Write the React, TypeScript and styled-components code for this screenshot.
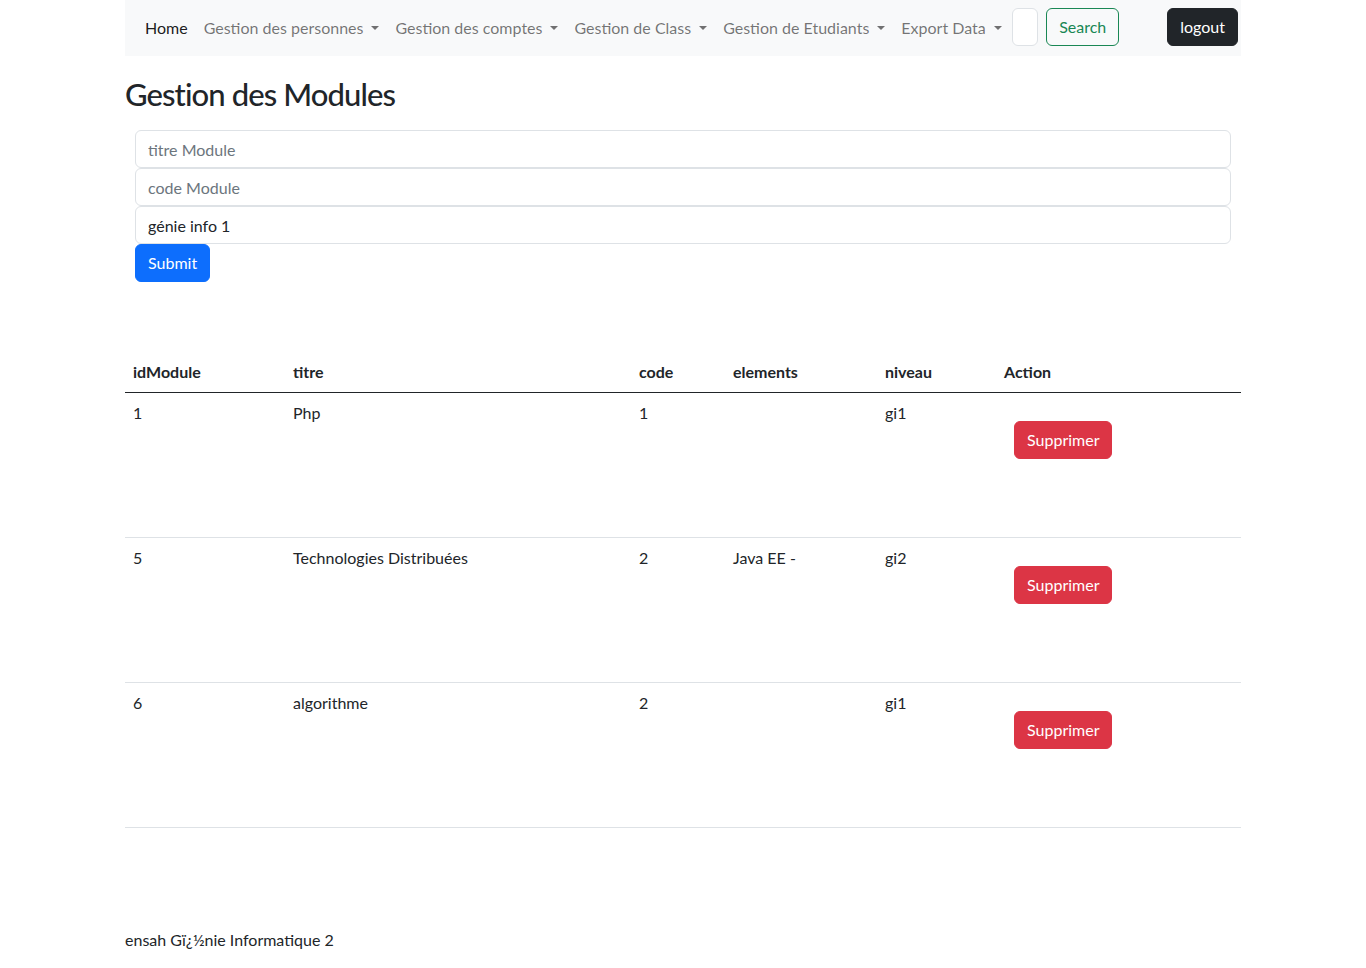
import { createGlobalStyle } from 'styled-components';
import styled from 'styled-components';

const GlobalStyle = createGlobalStyle`
  * {
    box-sizing: border-box;
  }

  body {
    margin: 0;
    background: #fff;
    color: #212529;
    font-family: Lato, 'Liberation Sans', sans-serif;
    font-size: 16px;
    line-height: 1.5;
  }
`;

type Module = {
  id: number;
  titre: string;
  code: string;
  elements: string;
  niveau: string;
};

const modules: Module[] = [
  { id: 1, titre: 'Php', code: '1', elements: '', niveau: 'gi1' },
  { id: 5, titre: 'Technologies Distribuées', code: '2', elements: 'Java EE -', niveau: 'gi2' },
  { id: 6, titre: 'algorithme', code: '2', elements: '', niveau: 'gi1' },
];

const navItems = [
  'Gestion des personnes',
  'Gestion des comptes',
  'Gestion de Class',
  'Gestion de Etudiants',
  'Export Data',
];

const columns = [
  { label: 'idModule', width: 160 },
  { label: 'titre', width: 346 },
  { label: 'code', width: 94 },
  { label: 'elements', width: 152 },
  { label: 'niveau', width: 119 },
  { label: 'Action', width: 245 },
];

export default function App() {
  return (
    <>
      <GlobalStyle />
      <Container>
        <Navbar>
          <NavList>
            <li>
              <NavLink $active>Home</NavLink>
            </li>
            {navItems.map((item) => (
              <li key={item}>
                <NavLink $dropdown>{item}</NavLink>
              </li>
            ))}
          </NavList>
          <SearchForm onSubmit={(e) => e.preventDefault()}>
            <SearchInput type="search" aria-label="Search" />
            <Button $variant="outline-success" type="submit">
              Search
            </Button>
          </SearchForm>
          <Button $variant="dark" type="button">
            logout
          </Button>
        </Navbar>

        <Title>Gestion des Modules</Title>

        <ModuleForm onSubmit={(e) => e.preventDefault()}>
          <Input placeholder="titre Module" />
          <Input placeholder="code Module" />
          <Input defaultValue="génie info 1" />
          <SubmitRow>
            <Button $variant="primary" type="submit">
              Submit
            </Button>
          </SubmitRow>
        </ModuleForm>

        <Table>
          <colgroup>
            {columns.map((col) => (
              <Col key={col.label} $width={col.width} />
            ))}
          </colgroup>
          <thead>
            <tr>
              {columns.map((col) => (
                <Th key={col.label}>{col.label}</Th>
              ))}
            </tr>
          </thead>
          <tbody>
            {modules.map((m) => (
              <tr key={m.id}>
                <Td>{m.id}</Td>
                <Td>{m.titre}</Td>
                <Td>{m.code}</Td>
                <Td>{m.elements}</Td>
                <Td>{m.niveau}</Td>
                <Td>
                  <ActionCell>
                    <Button $variant="danger" type="button">
                      Supprimer
                    </Button>
                  </ActionCell>
                </Td>
              </tr>
            ))}
          </tbody>
        </Table>

        <Footer>ensah Gï¿½nie Informatique 2</Footer>
      </Container>
    </>
  );
}

const Container = styled.div`
  width: 1116px;
  margin: 0 auto;
`;

const Navbar = styled.nav`
  display: flex;
  align-items: flex-start;
  height: 56px;
  padding: 8px 3px 0 12px;
  background: #f8f9fa;
`;

const NavList = styled.ul`
  display: flex;
  margin: 0 auto 0 0;
  padding: 0;
  list-style: none;
`;

const NavLink = styled.a<{ $active?: boolean; $dropdown?: boolean }>`
  display: flex;
  align-items: center;
  padding: 8px;
  color: ${({ $active }) => ($active ? 'rgba(0, 0, 0, 0.9)' : 'rgba(0, 0, 0, 0.55)')};
  text-decoration: none;
  cursor: pointer;

  ${({ $dropdown }) =>
    $dropdown &&
    `
    &::after {
      content: '';
      margin-left: 0.5em;
      border-top: 0.3em solid;
      border-right: 0.3em solid transparent;
      border-left: 0.3em solid transparent;
    }
  `}
`;

const SearchForm = styled.form`
  display: flex;
  gap: 8px;
  margin: 0 48px 0 0;
`;

const SearchInput = styled.input`
  width: 26px;
  height: 38px;
  padding: 6px 0;
  border: 1px solid #dee2e6;
  border-radius: 6px;
  background: #fff;
`;

const variants = {
  primary: { bg: '#0d6efd', border: '#0d6efd', color: '#fff' },
  danger: { bg: '#dc3545', border: '#dc3545', color: '#fff' },
  dark: { bg: '#212529', border: '#212529', color: '#fff' },
  'outline-success': { bg: 'transparent', border: '#198754', color: '#198754' },
};

const Button = styled.button<{ $variant: keyof typeof variants }>`
  height: 38px;
  padding: 6px 12px;
  border: 1px solid ${({ $variant }) => variants[$variant].border};
  border-radius: 6px;
  background: ${({ $variant }) => variants[$variant].bg};
  color: ${({ $variant }) => variants[$variant].color};
  font-family: inherit;
  font-size: 16px;
  line-height: 24px;
  cursor: pointer;
`;

const Title = styled.h2`
  margin: 19px 0 17px;
  font-size: 31px;
  font-weight: 500;
  line-height: 38px;
  letter-spacing: -0.9px;
`;

const ModuleForm = styled.form`
  display: flex;
  flex-direction: column;
  margin: 0 10px;
`;

const Input = styled.input`
  display: block;
  width: 100%;
  height: 38px;
  padding: 6px 12px;
  border: 1px solid #dee2e6;
  border-radius: 6px;
  color: #212529;
  font-family: inherit;
  font-size: 16px;
  line-height: 24px;

  &::placeholder {
    color: #6c757d;
  }
`;

const SubmitRow = styled.div`
  display: flex;
`;

const Table = styled.table`
  width: 100%;
  margin-top: 70px;
  border-collapse: collapse;
  table-layout: fixed;
`;

const Col = styled.col<{ $width: number }>`
  width: ${({ $width }) => $width}px;
`;

const Th = styled.th`
  padding: 8px;
  border-bottom: 1px solid #212529;
  font-weight: 700;
  text-align: left;
`;

const Td = styled.td`
  padding: 8px;
  border-bottom: 1px solid #dee2e6;
  vertical-align: top;
`;

const ActionCell = styled.div`
  height: 128px;
  padding: 20px 0 0 10px;
`;

const Footer = styled.footer`
  margin-top: 100px;
  padding-bottom: 16px;
`;
